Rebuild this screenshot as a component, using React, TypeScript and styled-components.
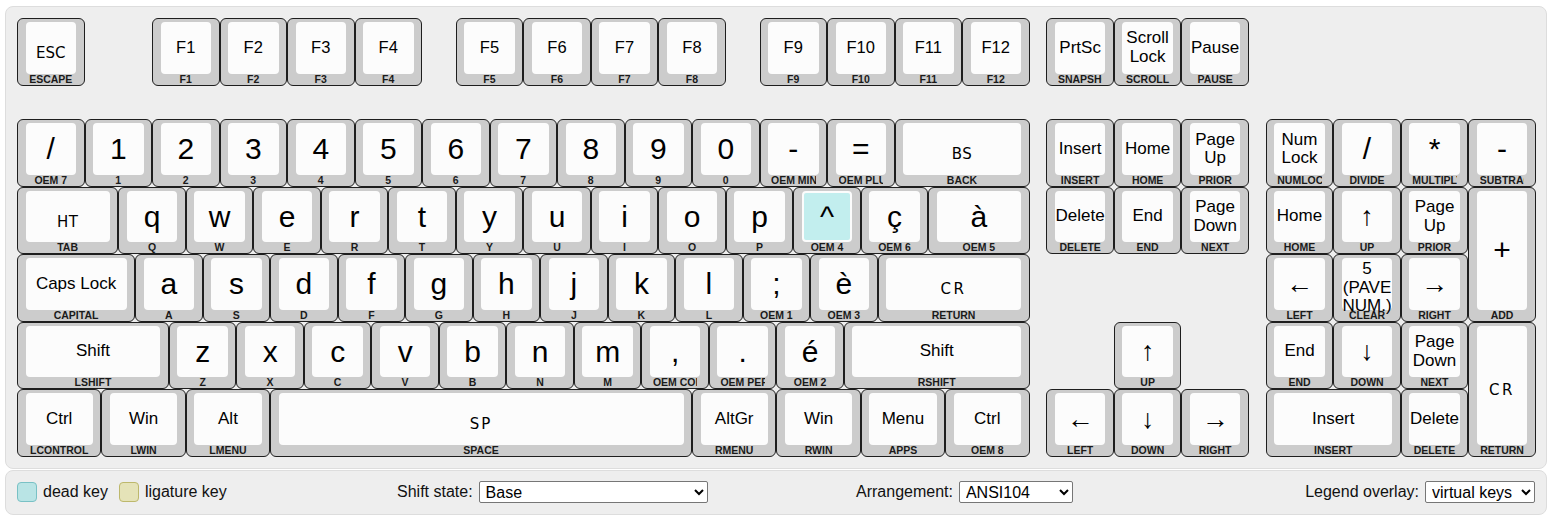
import React from 'react'
import styled, { createGlobalStyle } from 'styled-components'

const U = 67.5

type KeyDef = { t: string; l: string; x: number; y: number; w?: number; h?: number; dead?: boolean }
type Kind = 'ctrl' | 'arrow' | 'fkey' | 'char' | 'name'

// control pictures get a bit of extra spacing, like the reference
const CTRL: Record<string, number> = { ESC: 0, HT: 0.5, BS: 0.5, CR: 2.5, SP: 2 }
const ARROWS = '←↑→↓'

const run = (chars: string[], labels: string[], x0: number, y: number): KeyDef[] =>
  chars.map((t, i) => ({ t, l: labels[i], x: x0 + i, y }))

const keys: KeyDef[] = [
  // function row
  { t: 'ESC', l: 'ESCAPE', x: 0, y: 0 },
  ...run(['F1', 'F2', 'F3', 'F4'], ['F1', 'F2', 'F3', 'F4'], 2, 0),
  ...run(['F5', 'F6', 'F7', 'F8'], ['F5', 'F6', 'F7', 'F8'], 6.5, 0),
  ...run(['F9', 'F10', 'F11', 'F12'], ['F9', 'F10', 'F11', 'F12'], 11, 0),
  { t: 'PrtSc', l: 'SNAPSHOT', x: 15.25, y: 0 },
  { t: 'Scroll Lock', l: 'SCROLL', x: 16.25, y: 0 },
  { t: 'Pause', l: 'PAUSE', x: 17.25, y: 0 },

  // number row
  { t: '/', l: 'OEM 7', x: 0, y: 1.5 },
  ...run('1234567890'.split(''), '1234567890'.split(''), 1, 1.5),
  { t: '-', l: 'OEM MINUS', x: 11, y: 1.5 },
  { t: '=', l: 'OEM PLUS', x: 12, y: 1.5 },
  { t: 'BS', l: 'BACK', x: 13, y: 1.5, w: 2 },
  { t: 'Insert', l: 'INSERT', x: 15.25, y: 1.5 },
  { t: 'Home', l: 'HOME', x: 16.25, y: 1.5 },
  { t: 'Page Up', l: 'PRIOR', x: 17.25, y: 1.5 },
  { t: 'Num Lock', l: 'NUMLOCK', x: 18.5, y: 1.5 },
  { t: '/', l: 'DIVIDE', x: 19.5, y: 1.5 },
  { t: '*', l: 'MULTIPLY', x: 20.5, y: 1.5 },
  { t: '-', l: 'SUBTRACT', x: 21.5, y: 1.5 },

  // top letter row
  { t: 'HT', l: 'TAB', x: 0, y: 2.5, w: 1.5 },
  ...run('qwertyuiop'.split(''), 'QWERTYUIOP'.split(''), 1.5, 2.5),
  { t: '^', l: 'OEM 4', x: 11.5, y: 2.5, dead: true },
  { t: 'ç', l: 'OEM 6', x: 12.5, y: 2.5 },
  { t: 'à', l: 'OEM 5', x: 13.5, y: 2.5, w: 1.5 },
  { t: 'Delete', l: 'DELETE', x: 15.25, y: 2.5 },
  { t: 'End', l: 'END', x: 16.25, y: 2.5 },
  { t: 'Page Down', l: 'NEXT', x: 17.25, y: 2.5 },
  { t: 'Home', l: 'HOME', x: 18.5, y: 2.5 },
  { t: '↑', l: 'UP', x: 19.5, y: 2.5 },
  { t: 'Page Up', l: 'PRIOR', x: 20.5, y: 2.5 },
  { t: '+', l: 'ADD', x: 21.5, y: 2.5, h: 2 },

  // home row
  { t: 'Caps Lock', l: 'CAPITAL', x: 0, y: 3.5, w: 1.75 },
  ...run('asdfghjkl'.split(''), 'ASDFGHJKL'.split(''), 1.75, 3.5),
  { t: ';', l: 'OEM 1', x: 10.75, y: 3.5 },
  { t: 'è', l: 'OEM 3', x: 11.75, y: 3.5 },
  { t: 'CR', l: 'RETURN', x: 12.75, y: 3.5, w: 2.25 },
  { t: '←', l: 'LEFT', x: 18.5, y: 3.5 },
  { t: '5 (PAVE NUM.)', l: 'CLEAR', x: 19.5, y: 3.5 },
  { t: '→', l: 'RIGHT', x: 20.5, y: 3.5 },

  // bottom letter row
  { t: 'Shift', l: 'LSHIFT', x: 0, y: 4.5, w: 2.25 },
  ...run('zxcvbnm'.split(''), 'ZXCVBNM'.split(''), 2.25, 4.5),
  { t: ',', l: 'OEM COMMA', x: 9.25, y: 4.5 },
  { t: '.', l: 'OEM PERIOD', x: 10.25, y: 4.5 },
  { t: 'é', l: 'OEM 2', x: 11.25, y: 4.5 },
  { t: 'Shift', l: 'RSHIFT', x: 12.25, y: 4.5, w: 2.75 },
  { t: '↑', l: 'UP', x: 16.25, y: 4.5 },
  { t: 'End', l: 'END', x: 18.5, y: 4.5 },
  { t: '↓', l: 'DOWN', x: 19.5, y: 4.5 },
  { t: 'Page Down', l: 'NEXT', x: 20.5, y: 4.5 },
  { t: 'CR', l: 'RETURN', x: 21.5, y: 4.5, h: 2 },

  // modifiers
  { t: 'Ctrl', l: 'LCONTROL', x: 0, y: 5.5, w: 1.25 },
  { t: 'Win', l: 'LWIN', x: 1.25, y: 5.5, w: 1.25 },
  { t: 'Alt', l: 'LMENU', x: 2.5, y: 5.5, w: 1.25 },
  { t: 'SP', l: 'SPACE', x: 3.75, y: 5.5, w: 6.25 },
  { t: 'AltGr', l: 'RMENU', x: 10, y: 5.5, w: 1.25 },
  { t: 'Win', l: 'RWIN', x: 11.25, y: 5.5, w: 1.25 },
  { t: 'Menu', l: 'APPS', x: 12.5, y: 5.5, w: 1.25 },
  { t: 'Ctrl', l: 'OEM 8', x: 13.75, y: 5.5, w: 1.25 },
  { t: '←', l: 'LEFT', x: 15.25, y: 5.5 },
  { t: '↓', l: 'DOWN', x: 16.25, y: 5.5 },
  { t: '→', l: 'RIGHT', x: 17.25, y: 5.5 },
  { t: 'Insert', l: 'INSERT', x: 18.5, y: 5.5, w: 2 },
  { t: 'Delete', l: 'DELETE', x: 20.5, y: 5.5 },
]

const kindOf = (t: string): Kind => {
  if (CTRL[t] !== undefined) return 'ctrl'
  if (ARROWS.includes(t)) return 'arrow'
  if (/^F\d+$/.test(t)) return 'fkey'
  if (t.length === 1) return 'char'
  return 'name'
}

const App: React.FC = () => {
  return (
    <Page>
      <GlobalStyle />
      <KeyboardPanel>
        <Board>
          {keys.map((k, i) => {
            const kind = kindOf(k.t)
            return (
              <Key key={i} $x={k.x} $y={k.y} $w={k.w ?? 1} $h={k.h ?? 1}>
                <Cap $dead={k.dead}>
                  <Legend $kind={kind} $spacing={CTRL[k.t] ?? 0}>{k.t}</Legend>
                </Cap>
                <VkLabel>{k.l}</VkLabel>
              </Key>
            )
          })}
        </Board>
      </KeyboardPanel>

      <LegendBar>
        <Swatches>
          <Swatch $bg="#b9e4e5" $border="#79c1c5" />
          <SwatchText>dead key</SwatchText>
          <Swatch $bg="#e5e3b8" $border="#bdb86c" />
          <SwatchText>ligature key</SwatchText>
        </Swatches>
        <Field>
          <span>Shift state:</span>
          <Select $w={229} defaultValue="Base">
            <option>Base</option>
            <option>Shift</option>
            <option>AltGr</option>
          </Select>
        </Field>
        <Field>
          <span>Arrangement:</span>
          <Select $w={114} defaultValue="ANSI104">
            <option>ANSI104</option>
            <option>ISO105</option>
          </Select>
        </Field>
        <Field>
          <span>Legend overlay:</span>
          <Select $w={110} defaultValue="virtual keys">
            <option>virtual keys</option>
            <option>scan codes</option>
          </Select>
        </Field>
      </LegendBar>
    </Page>
  )
}

export default App

const GlobalStyle = createGlobalStyle`
  html, body {
    margin: 0;
    background: #ffffff;
    font-family: 'Liberation Sans', Arial, sans-serif;
  }
`

const Page = styled.div`
  padding: 6px 9px 0 5px;
`

const KeyboardPanel = styled.div`
  background: #eeeeee;
  border: 1px solid #dddddd;
  border-radius: 8px;
  padding: 11px 10px 11px 11px;
`

const Board = styled.div`
  display: grid;
  grid-template-columns: repeat(90, ${U / 4}px);
  grid-template-rows: repeat(13, ${U / 2}px);
`

const Key = styled.div<{ $x: number; $y: number; $w: number; $h: number }>`
  grid-column: ${p => p.$x * 4 + 1} / span ${p => p.$w * 4};
  grid-row: ${p => p.$y * 2 + 1} / span ${p => p.$h * 2};
  display: flex;
  flex-direction: column;
  min-width: 0;
  min-height: 0;
  background: #cccccc;
  border: 1px solid #1e1e1e;
  border-radius: 6px;
  padding: 3px 7.5px 0;
`

const Cap = styled.div<{ $dead?: boolean }>`
  flex: 1;
  min-height: 0;
  display: flex;
  flex-direction: column;
  justify-content: safe center;
  align-items: center;
  background: ${p => (p.$dead ? '#c2eeee' : '#fcfcfc')};
  border: 2px solid #fcfcfc;
  border-radius: 4px;
  text-align: center;
  color: #000000;
`

const Legend = styled.span<{ $kind: Kind; $spacing: number }>`
  font-family: ${p => (p.$kind === 'ctrl' ? "'DejaVu Sans', Verdana, sans-serif" : "'Liberation Sans', Arial, sans-serif")};
  font-size: ${p =>
    p.$kind === 'char' ? 30 : p.$kind === 'arrow' ? 27 : p.$kind === 'fkey' ? 16.5 : p.$kind === 'ctrl' ? 15 : 17}px;
  line-height: ${p => (p.$kind === 'name' ? '18.5px' : 'normal')};
  letter-spacing: ${p => p.$spacing}px;
  margin-top: ${p => (p.$kind === 'ctrl' ? 10 : 0)}px;
  white-space: ${p => (p.$kind === 'name' ? 'normal' : 'nowrap')};
`

const VkLabel = styled.div`
  flex: none;
  height: 11px;
  line-height: 11px;
  margin: 0 3px;
  font-family: 'Liberation Sans', Arial, sans-serif;
  font-size: 10.5px;
  font-weight: bold;
  color: #1a1a1a;
  text-align: center;
  white-space: nowrap;
  overflow: hidden;
`

const LegendBar = styled.div`
  margin-top: 1px;
  height: 45px;
  box-sizing: border-box;
  background: #eeeeee;
  border: 1px solid #dddddd;
  border-radius: 8px;
  padding: 0 11px;
  display: grid;
  grid-template-columns: 380px 459px 1fr auto;
  align-items: center;
  font-size: 16px;
  color: #111111;
`

const Swatches = styled.div`
  display: flex;
  align-items: center;
`

const Swatch = styled.div<{ $bg: string; $border: string }>`
  width: 20px;
  height: 20px;
  box-sizing: border-box;
  background: ${p => p.$bg};
  border: 1px solid ${p => p.$border};
  border-radius: 4px;
  margin-right: 6px;
`

const SwatchText = styled.span`
  margin-right: 11px;
`

const Field = styled.label`
  display: flex;
  align-items: center;
  gap: 6px;
`

const Select = styled.select<{ $w: number }>`
  width: ${p => p.$w}px;
  height: 22px;
  box-sizing: border-box;
  font-family: 'Liberation Sans', Arial, sans-serif;
  font-size: 16px;
  color: #000000;
  background: #ffffff;
  border: 1px solid #767676;
  border-radius: 2px;
  padding: 0 0 0 2px;
`
